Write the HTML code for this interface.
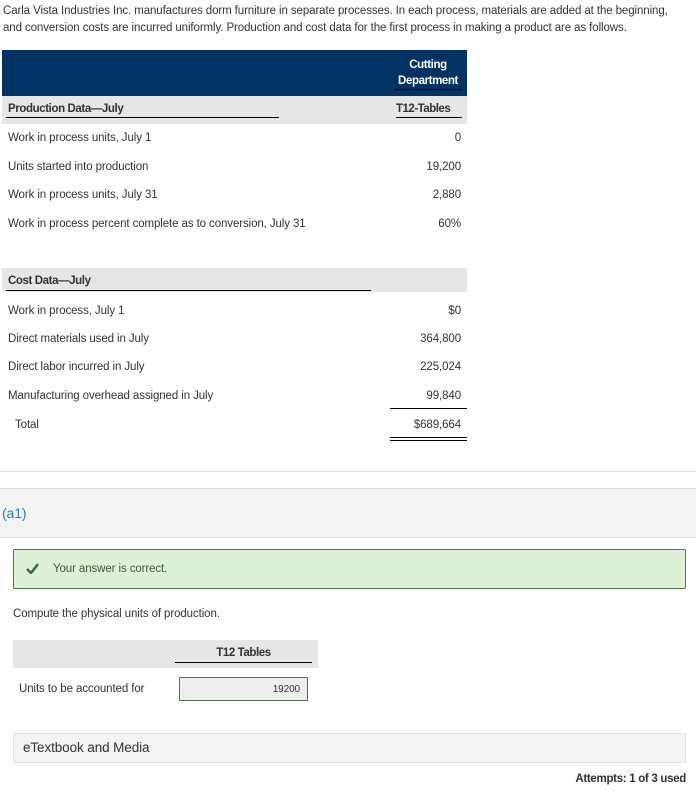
<!DOCTYPE html>
<html><head><style>
*{margin:0;padding:0;box-sizing:border-box}
body{width:696px;height:791px;background:#fff;font-family:"Liberation Sans",sans-serif;color:#333;position:relative;overflow:hidden}
.a{position:absolute;white-space:nowrap;font-size:11.5px;letter-spacing:-0.1px}
.r{text-align:right}
</style></head><body>
<div class="a" style="left:3px;top:3px;line-height:17px">Carla Vista Industries Inc. manufactures dorm furniture in separate processes. In each process, materials are added at the beginning,<br>and conversion costs are incurred uniformly. Production and cost data for the first process in making a product are as follows.</div>
<div style="position:absolute;left:2px;top:50px;width:465px;height:46px;background:#003263"></div>
<div class="a" style="left:390px;top:57px;width:76px;color:#fff;font-weight:bold;text-align:center;line-height:16px;letter-spacing:-0.4px">Cutting<br>Department</div>
<div style="position:absolute;left:395px;top:89px;width:67px;height:1px;background:#000"></div>
<div style="position:absolute;left:2px;top:96px;width:465px;height:28px;background:#e6e6e6"></div>
<div class="a" style="left:8px;top:103px;font-weight:bold;letter-spacing:-0.4px">Production Data—July</div>
<div style="position:absolute;left:6px;top:117px;width:273px;height:1px;background:#000"></div>
<div class="a" style="left:396px;top:103px;font-weight:bold;letter-spacing:-0.5px">T12-Tables</div>
<div style="position:absolute;left:396px;top:117px;width:66px;height:1px;background:#000"></div>
<div class="a" style="left:8px;top:132px">Work in process units, July 1</div><div class="a r" style="right:235px;top:132px">0</div>
<div class="a" style="left:8px;top:161px">Units started into production</div><div class="a r" style="right:235px;top:161px">19,200</div>
<div class="a" style="left:8px;top:189px">Work in process units, July 31</div><div class="a r" style="right:235px;top:189px">2,880</div>
<div class="a" style="left:8px;top:218px">Work in process percent complete as to conversion, July 31</div><div class="a r" style="right:235px;top:218px">60%</div>
<div style="position:absolute;left:2px;top:268px;width:465px;height:24px;background:#e6e6e6"></div>
<div class="a" style="left:8px;top:275px;font-weight:bold;letter-spacing:-0.4px">Cost Data—July</div>
<div style="position:absolute;left:6px;top:290px;width:365px;height:1px;background:#000"></div>
<div class="a" style="left:8px;top:305px">Work in process, July 1</div><div class="a r" style="right:235px;top:305px">$0</div>
<div class="a" style="left:8px;top:333px">Direct materials used in July</div><div class="a r" style="right:235px;top:333px">364,800</div>
<div class="a" style="left:8px;top:361px">Direct labor incurred in July</div><div class="a r" style="right:235px;top:361px">225,024</div>
<div class="a" style="left:8px;top:390px">Manufacturing overhead assigned in July</div><div class="a r" style="right:235px;top:390px">99,840</div>
<div style="position:absolute;left:390px;top:408px;width:77px;height:1px;background:#000"></div>
<div class="a" style="left:15px;top:419px">Total</div><div class="a r" style="right:235px;top:419px">$689,664</div>
<div style="position:absolute;left:390px;top:437px;width:77px;height:4px;border-top:1px solid #000;border-bottom:1px solid #000"></div>
<div style="position:absolute;left:0;top:471px;width:696px;height:1px;background:#ddd"></div>
<div style="position:absolute;left:0;top:488px;width:696px;height:50px;background:#f4f4f4;border-top:1px solid #ddd;border-bottom:1px solid #ddd"></div>
<div class="a" style="left:2px;top:505px;font-size:14px;color:#2a7ab8">(a1)</div>
<div style="position:absolute;left:13px;top:549px;width:673px;height:40px;background:#dff0d8;border:1px solid #4b7a4b;border-radius:2px"></div>
<svg style="position:absolute;left:26px;top:563px" width="13" height="11" viewBox="0 0 13 11"><path d="M1 6 L5 10 L12 1" stroke="#3a6b3a" stroke-width="2.6" fill="none"/></svg>
<div class="a" style="left:53px;top:563px;color:#3c5a3c">Your answer is correct.</div>
<div class="a" style="left:13px;top:608px">Compute the physical units of production.</div>
<div style="position:absolute;left:13px;top:640px;width:305px;height:28px;background:#e6e6e6"></div>
<div class="a" style="left:175px;top:647px;width:137px;text-align:center;font-weight:bold;letter-spacing:-0.4px">T12 Tables</div>
<div style="position:absolute;left:175px;top:662px;width:137px;height:1px;background:#000"></div>
<div class="a" style="left:19px;top:683px">Units to be accounted for</div>
<div style="position:absolute;left:179px;top:677px;width:129px;height:24px;background:#eee;border:1px solid #4b7a4b"></div>
<div class="a r" style="right:396px;top:684px;font-size:10px">19200</div>
<div style="position:absolute;left:13px;top:733px;width:673px;height:30px;background:#f4f4f4;border:1px solid #e2e2e2;border-radius:2px"></div>
<div class="a" style="left:23px;top:740px;font-size:13.5px">eTextbook and Media</div>
<div class="a r" style="right:10px;top:773px;font-weight:bold;letter-spacing:-0.3px">Attempts: 1 of 3 used</div>
</body></html>
